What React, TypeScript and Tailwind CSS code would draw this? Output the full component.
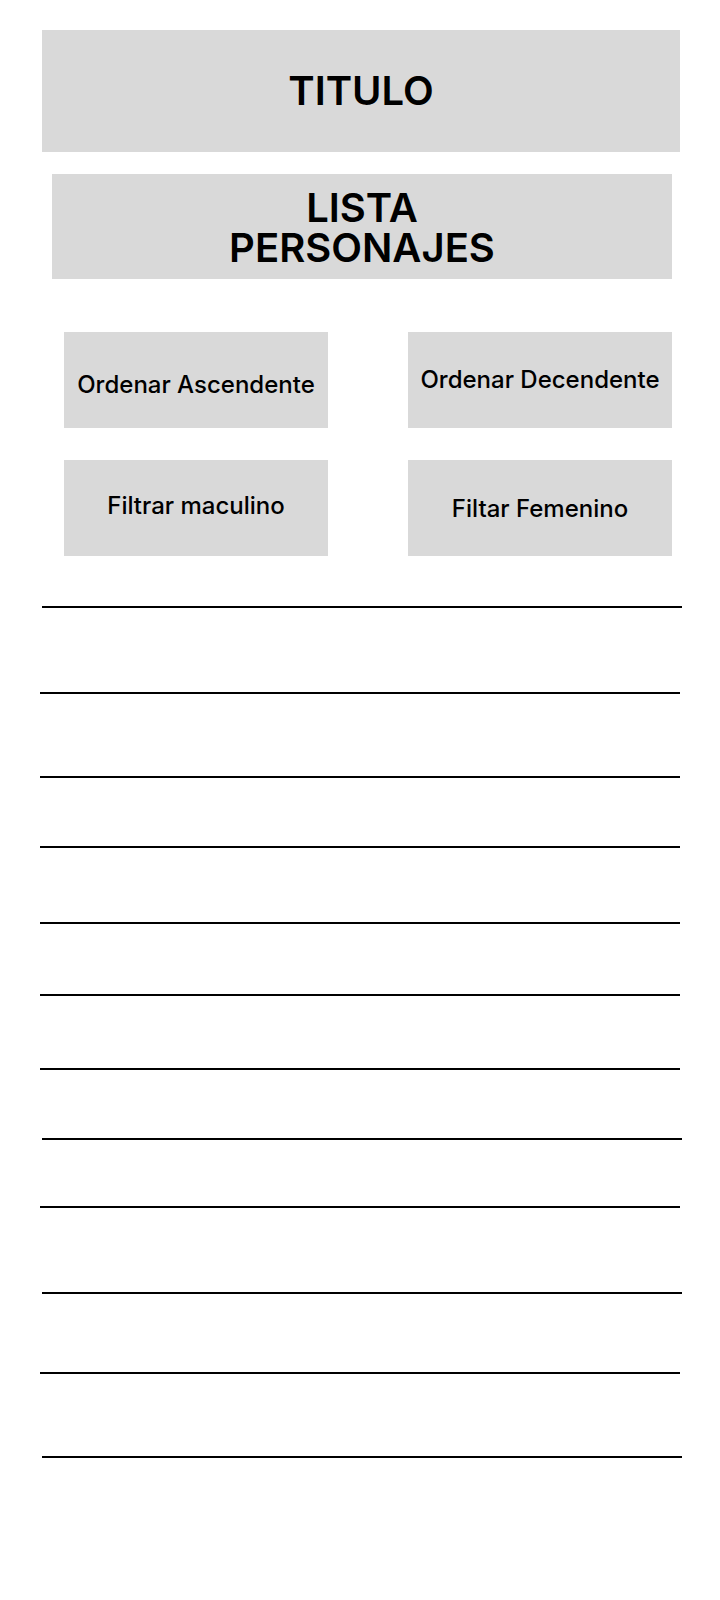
import React from "react";

const botones = [
  { label: "Ordenar Ascendente", extra: "pt-[10px]" },
  { label: "Ordenar Decendente", extra: "" },
  { label: "Filtrar maculino", extra: "pb-[4px]" },
  { label: "Filtar Femenino", extra: "pt-[2px]" },
];

// separadores de la lista (margen arriba + desplazamiento a la izquierda)
const lineas = [
  "mt-[50px] ml-[42px]",
  "mt-[84px] ml-[40px]",
  "mt-[82px] ml-[40px]",
  "mt-[68px] ml-[40px]",
  "mt-[74px] ml-[40px]",
  "mt-[70px] ml-[40px]",
  "mt-[72px] ml-[40px]",
  "mt-[68px] ml-[42px]",
  "mt-[66px] ml-[40px]",
  "mt-[84px] ml-[42px]",
  "mt-[78px] ml-[40px]",
  "mt-[82px] ml-[42px]",
];

const App = () => {
  return (
    <div className="w-[720px] min-h-[1600px] bg-white font-['Inter',sans-serif] text-black pt-[30px]">
      <div className="ml-[42px] w-[638px] h-[122px] bg-[#d9d9d9] flex items-center justify-center">
        <h1 className="text-[40px] font-semibold leading-none">TITULO</h1>
      </div>

      <div className="ml-[52px] mt-[22px] w-[620px] h-[105px] bg-[#d9d9d9] flex items-center justify-center">
        <h2 className="text-[40px] font-semibold leading-[40px] text-center pt-[2px]">
          LISTA
          <br />
          PERSONAJES
        </h2>
      </div>

      <div className="ml-[64px] mt-[53px] w-[608px] grid grid-cols-[264px_264px] gap-x-[80px] gap-y-[32px]">
        {botones.map((b) => (
          <button
            key={b.label}
            className={`h-[96px] bg-[#d9d9d9] flex items-center justify-center text-[24px] font-medium ${b.extra}`}
          >
            {b.label}
          </button>
        ))}
      </div>

      <div className="flex flex-col">
        {lineas.map((cls, i) => (
          <div key={i} className={`h-[2px] w-[640px] bg-black ${cls}`} />
        ))}
      </div>
    </div>
  );
};

export default App;
